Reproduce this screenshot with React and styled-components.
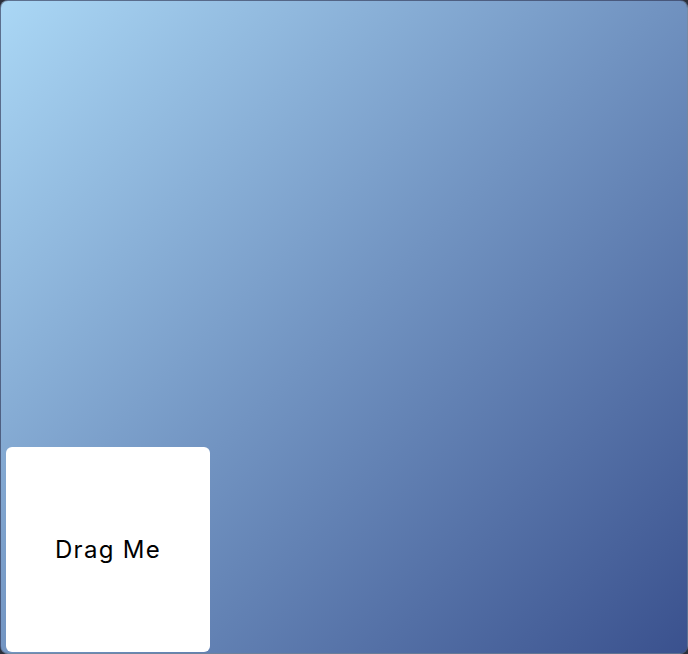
import React from "react";
import styled, { createGlobalStyle } from "styled-components";

const GlobalStyle = createGlobalStyle`
  html, body {
    margin: 0;
    padding: 0;
    background: #2b2f3a;
  }
  body {
    font-family: "Inter", "Noto Sans", sans-serif;
  }
`;

const Board = styled.div`
  box-sizing: border-box;
  width: 688px;
  height: 654px;
  border-radius: 8px;
  border: 1px solid rgba(80, 90, 110, 0.6);
  background: linear-gradient(135deg, #aad7f5 0%, #7193c1 50%, #3a518e 100%);
  display: flex;
  align-items: flex-end;
  padding: 0 5px 1px 5px;
  overflow: hidden;
`;

const Card = styled.div`
  width: 204px;
  height: 205px;
  background: #ffffff;
  border-radius: 6px;
  display: flex;
  align-items: center;
  justify-content: center;
  font-size: 24px;
  font-weight: 400;
  letter-spacing: 1.3px;
  color: #000000;
  cursor: grab;
  user-select: none;
`;

const App = () => {
  return (
    <>
      <GlobalStyle />
      <Board>
        <Card>Drag Me</Card>
      </Board>
    </>
  );
};

export default App;
